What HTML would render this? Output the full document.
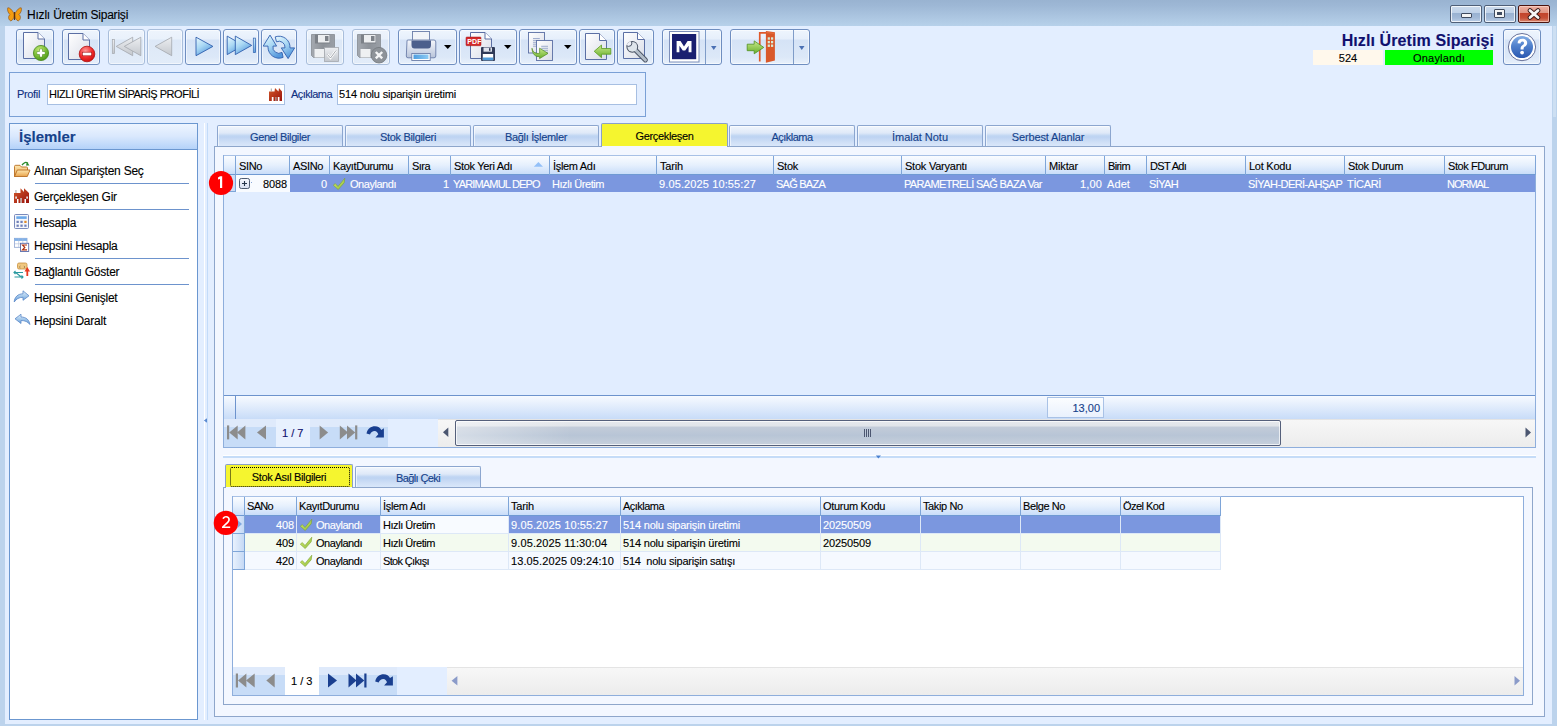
<!DOCTYPE html>
<html><head><meta charset="utf-8"><style>
*{box-sizing:border-box;margin:0;padding:0}
html,body{width:1557px;height:726px;overflow:hidden;background:#bcd3ec;font-family:"Liberation Sans",sans-serif;font-size:11px;color:#000}
body *{-webkit-text-stroke:0.12px currentColor}
.a{position:absolute}
.tb{position:absolute;top:29px;height:36px;border:1px solid #6f8ec0;border-radius:3px;background:linear-gradient(#eef5fd 0,#e6effb 27%,#d5e3f6 29%,#dce8f8 80%,#e8f0fb 100%);box-shadow:inset 0 0 0 1px rgba(255,255,255,.55)}
.tb.dis{border-color:#a9bedb;background:linear-gradient(#eef4fc 0,#e9f1fb 27%,#dde8f7 29%,#e2ecf9 100%)}
.tb .sp{position:absolute;top:0;bottom:0;border-left:1px solid #7f9cc8}
.lbl{color:#0f2f80;font-size:11px;white-space:nowrap}
.inp{position:absolute;background:#fff;border:1px solid #a7bfe2;height:21px}
.tab{position:absolute;top:125px;height:21px;width:126px;border:1px solid #8ca6cf;border-bottom:none;border-radius:2px 2px 0 0;background:linear-gradient(#f1f6fd 0,#dfe9f8 35%,#c2d7f3 48%,#bdd3f2 55%,#cfdff6 80%,#d9e7fa 100%);box-shadow:inset 1px 1px 0 rgba(255,255,255,.6);color:#15428b;text-align:center;line-height:22px;font-size:11px}
.tab.sel{background:linear-gradient(#f5f52f 0,#f5f52f calc(100% - 1px),#f3f7ff calc(100% - 1px));color:#000;border-color:#8aa0c8;box-shadow:none}
.gh{position:absolute;height:20px;background:linear-gradient(#fafcff 0,#e6f0fd 50%,#c9ddf9 100%);border-top:1px solid #a8c1e6;border-bottom:1px solid #6f9ad3}
.hc{position:absolute;top:0;height:19px;border-right:1px solid #7ea5d8;line-height:18px;padding-left:3px;white-space:nowrap;overflow:hidden;font-size:11px}
.hs{position:relative;top:1px}
.rc{position:absolute;height:18px;line-height:17px;white-space:pre;overflow:hidden;font-size:11px;padding:0 2px 0 3px}
.badge{position:absolute;width:24px;height:24px;border-radius:50%;background:#f00;color:#fff;font-size:17px;line-height:24px;text-align:center}
.item{position:absolute;left:34px;font-size:12px;white-space:nowrap}
.sep{position:absolute;left:35px;width:154px;height:1px;background:#6d93cd}
</style></head><body>
<div class="a" style="left:0;top:0;width:1557px;height:26px;background:linear-gradient(#99b3d1 0,#9db7d5 20%,#b7d1ea 100%)"></div>
<div class="a" style="left:27px;top:8px;font-size:12px;color:#000;letter-spacing:-0.201px;">Hızlı Üretim Siparişi</div>
<div class="a" style="left:5px;top:26px;width:1547px;height:698px;background:#e3eeff"></div>
<div class="a" style="left:1553px;top:26px;width:3px;height:91px;background:#cddff2"></div>
<div class="a" style="left:1450px;top:5px;width:32px;height:18px;border:1px solid #4f5f78;border-radius:2px;box-shadow:inset 0 0 0 1px rgba(255,255,255,.75);background:linear-gradient(#cddbed 0,#bfd1e8 42%,#98b1d1 44%,#a3bad8 75%,#bccfe7 100%)"><div class="a" style="left:10px;top:7px;width:11px;height:5px;background:#f4f4f4;border:1px solid #3f4a5e;border-radius:1px"></div></div>
<div class="a" style="left:1484px;top:5px;width:32px;height:18px;border:1px solid #4f5f78;border-radius:2px;box-shadow:inset 0 0 0 1px rgba(255,255,255,.75);background:linear-gradient(#cddbed 0,#bfd1e8 42%,#98b1d1 44%,#a3bad8 75%,#bccfe7 100%)"><div class="a" style="left:9px;top:3px;width:11px;height:9px;background:#f4f4f4;border:1px solid #3f4a5e;border-radius:1px"><div class="a" style="left:2px;top:2px;width:5px;height:3px;background:#3f4a5e;border:1px solid #3f4a5e"></div></div></div>
<div class="a" style="left:1518px;top:5px;width:32px;height:18px;border:1px solid #4a1410;border-radius:2px;box-shadow:inset 0 0 0 1px rgba(255,220,210,.6);background:linear-gradient(#eeb0a2 0,#df9482 42%,#c2432a 44%,#c64f36 75%,#d98a72 100%)"><svg class="a" style="left:8px;top:2px" width="14" height="12" viewBox="0 0 14 12"><path d="M3 2.5L11 9.5M11 2.5L3 9.5" stroke="#3a1a18" stroke-width="4.6" stroke-linecap="round"/><path d="M3 2.5L11 9.5M11 2.5L3 9.5" stroke="#f6f6f6" stroke-width="2.8" stroke-linecap="round"/></svg></div>
<div class="tb " style="left:16px;width:38px"></div>
<div class="tb " style="left:62px;width:38px"></div>
<div class="tb dis" style="left:108px;width:37px"></div>
<div class="tb dis" style="left:147px;width:36px"></div>
<div class="tb " style="left:185px;width:36px"></div>
<div class="tb " style="left:223px;width:36px"></div>
<div class="tb " style="left:261px;width:36px"></div>
<div class="tb dis" style="left:306px;width:38px"></div>
<div class="tb dis" style="left:352px;width:38px"></div>
<div class="tb " style="left:398px;width:59px"></div>
<div class="tb " style="left:459px;width:58px"></div>
<div class="tb " style="left:519px;width:58px"></div>
<div class="tb " style="left:579px;width:36px"></div>
<div class="tb " style="left:617px;width:37px"></div>
<div class="tb " style="left:662px;width:60px"><div class="sp" style="left:42px"></div></div>
<div class="tb " style="left:730px;width:80px"><div class="sp" style="left:62px"></div></div>
<div class="a" style="left:1293px;top:32px;width:201px;text-align:right;font-size:16px;font-weight:bold;color:#10106e;white-space:nowrap;letter-spacing:0.1px">Hızlı Üretim Siparişi</div>
<div class="a" style="left:1313px;top:50px;width:70px;height:15px;background:#fff8ec;text-align:center;font-size:11px;line-height:17px">524</div>
<div class="a" style="left:1385px;top:50px;width:108px;height:15px;background:#00ff00;text-align:center;font-size:11px;line-height:17px;letter-spacing:0.2px">Onaylandı</div>
<div class="tb" style="left:1503px;width:38px"></div>
<div class="a" style="left:9px;top:72px;width:637px;height:45px;border:1px solid #7aa0d6"></div>
<div class="a lbl" style="left:17px;top:88px;letter-spacing:-0.344px;">Profil</div>
<div class="inp" style="left:47px;top:84px;width:238px"><span class="a" style="left:1px;top:3px;white-space:nowrap;letter-spacing:-0.479px;">HIZLI ÜRETİM SİPARİŞ PROFİLİ</span></div>
<div class="a lbl" style="left:291px;top:88px;letter-spacing:-0.529px;">Açıklama</div>
<div class="inp" style="left:337px;top:84px;width:300px"><span class="a" style="left:1px;top:3px;white-space:nowrap;letter-spacing:-0.18px;">514 nolu siparişin üretimi</span></div>
<div class="a" style="left:9px;top:123px;width:189px;height:597px;background:#fff;border:1px solid #6b97d0"></div>
<div class="a" style="left:10px;top:124px;width:187px;height:26px;background:linear-gradient(#eef5ff 0,#d9e8fd 50%,#b4d2f9 100%);border-bottom:1px solid #6b97d0"></div>
<div class="a" style="left:19px;top:128px;font-size:15px;font-weight:bold;color:#15428b">İşlemler</div>
<div class="item" style="top:164px;letter-spacing:-0.246px;">Alınan Siparişten Seç</div>
<div class="item" style="top:190px;letter-spacing:-0.26px;">Gerçekleşen Gir</div>
<div class="item" style="top:216px;letter-spacing:-0.283px;">Hesapla</div>
<div class="item" style="top:239px;letter-spacing:-0.262px;">Hepsini Hesapla</div>
<div class="item" style="top:265px;letter-spacing:-0.237px;">Bağlantılı Göster</div>
<div class="item" style="top:291px;letter-spacing:-0.246px;">Hepsini Genişlet</div>
<div class="item" style="top:314px;letter-spacing:-0.242px;">Hepsini Daralt</div>
<div class="sep" style="top:183px"></div>
<div class="sep" style="top:209px"></div>
<div class="sep" style="top:258px"></div>
<div class="sep" style="top:284px"></div>
<div class="a" style="left:204px;top:123px;width:1px;height:597px;background:#ffffff"></div>
<div class="a" style="left:207px;top:123px;width:1px;height:597px;background:#c3dbf9"></div>
<div class="a" style="left:214px;top:146px;width:1331px;height:571px;background:#f3f7ff;border:1px solid #8ea6cb"></div>
<div class="tab" style="left:217px;letter-spacing:-0.387px;">Genel Bilgiler</div>
<div class="tab" style="left:345px;letter-spacing:-0.323px;">Stok Bilgileri</div>
<div class="tab" style="left:473px;letter-spacing:-0.331px;">Bağlı İşlemler</div>
<div class="tab sel" style="left:601px;top:123px;height:24px;line-height:25px;width:127px;letter-spacing:-0.341px;">Gerçekleşen</div>
<div class="tab" style="left:729px;letter-spacing:-0.529px;">Açıklama</div>
<div class="tab" style="left:857px;letter-spacing:-0.022px;">İmalat Notu</div>
<div class="tab" style="left:985px;letter-spacing:-0.147px;">Serbest Alanlar</div>
<div class="a" style="left:223px;top:155px;width:1313px;height:293px;border:1px solid #8eaedc;background:#e1edff"></div>
<div class="gh" style="left:224px;top:155px;width:1311px"></div>
<div class="hc" style="left:224px;top:156px;width:12px;letter-spacing:0px;"><span class="hs"></span></div>
<div class="hc" style="left:236px;top:156px;width:54px;letter-spacing:-0.364px;"><span class="hs">SINo</span></div>
<div class="hc" style="left:290px;top:156px;width:40px;letter-spacing:-0.358px;"><span class="hs">ASINo</span></div>
<div class="hc" style="left:330px;top:156px;width:79px;letter-spacing:-0.381px;"><span class="hs">KayıtDurumu</span></div>
<div class="hc" style="left:409px;top:156px;width:42px;letter-spacing:-0.543px;"><span class="hs">Sıra</span></div>
<div class="hc" style="left:451px;top:156px;width:99px;letter-spacing:-0.323px;"><span class="hs">Stok Yeri Adı</span></div>
<div class="hc" style="left:550px;top:156px;width:107px;letter-spacing:-0.316px;"><span class="hs">İşlem Adı</span></div>
<div class="hc" style="left:657px;top:156px;width:117px;letter-spacing:-0.212px;"><span class="hs">Tarih</span></div>
<div class="hc" style="left:774px;top:156px;width:128px;letter-spacing:-0.253px;"><span class="hs">Stok</span></div>
<div class="hc" style="left:902px;top:156px;width:144px;letter-spacing:-0.233px;"><span class="hs">Stok Varyantı</span></div>
<div class="hc" style="left:1046px;top:156px;width:59px;letter-spacing:-0.157px;"><span class="hs">Miktar</span></div>
<div class="hc" style="left:1105px;top:156px;width:42px;letter-spacing:-0.61px;"><span class="hs">Birim</span></div>
<div class="hc" style="left:1147px;top:156px;width:99px;letter-spacing:-0.652px;"><span class="hs">DST Adı</span></div>
<div class="hc" style="left:1246px;top:156px;width:99px;letter-spacing:-0.255px;"><span class="hs">Lot Kodu</span></div>
<div class="hc" style="left:1345px;top:156px;width:100px;letter-spacing:-0.307px;"><span class="hs">Stok Durum</span></div>
<div class="hc" style="left:1445px;top:156px;width:91px;letter-spacing:-0.436px;"><span class="hs">Stok FDurum</span></div>
<div class="a" style="left:290px;top:175px;width:1245px;height:17px;background:#7b97df"></div>
<div class="a" style="left:236px;top:175px;width:54px;height:17px;background:#f8fbff"></div>
<div class="a" style="left:224px;top:175px;width:12px;height:17px;background:linear-gradient(90deg,#e8f1fd,#c5d9f5);border-right:1px solid #7ea5d8;border-bottom:1px solid #7ea5d8"></div>
<div class="rc" style="left:235px;top:176px;width:54px;text-align:right;color:#000;letter-spacing:-0.118px;">8088</div>
<div class="rc" style="left:289px;top:176px;width:40px;text-align:right;color:#fff;letter-spacing:-0.118px;">0</div>
<div class="rc" style="left:347px;top:176px;width:61px;text-align:left;color:#fff;letter-spacing:-0.461px;">Onaylandı</div>
<div class="rc" style="left:408px;top:176px;width:43px;text-align:right;color:#fff;letter-spacing:-0.118px;">1</div>
<div class="rc" style="left:450px;top:176px;width:99px;text-align:left;color:#fff;letter-spacing:-0.831px;">YARIMAMUL DEPO</div>
<div class="rc" style="left:549px;top:176px;width:107px;text-align:left;color:#fff;letter-spacing:-0.454px;">Hızlı Üretim</div>
<div class="rc" style="left:656px;top:176px;width:117px;text-align:left;color:#fff;letter-spacing:0.122px;">9.05.2025 10:55:27</div>
<div class="rc" style="left:773px;top:176px;width:128px;text-align:left;color:#fff;letter-spacing:-0.752px;">SAĞ BAZA</div>
<div class="rc" style="left:901px;top:176px;width:144px;text-align:left;color:#fff;letter-spacing:-0.661px;">PARAMETRELİ SAĞ BAZA Var</div>
<div class="rc" style="left:1045px;top:176px;width:59px;text-align:right;color:#fff;letter-spacing:0.148px;">1,00</div>
<div class="rc" style="left:1104px;top:176px;width:42px;text-align:left;color:#fff;letter-spacing:0.093px;">Adet</div>
<div class="rc" style="left:1146px;top:176px;width:99px;text-align:left;color:#fff;letter-spacing:-0.602px;">SİYAH</div>
<div class="rc" style="left:1245px;top:176px;width:99px;text-align:left;color:#fff;letter-spacing:-0.557px;">SİYAH-DERİ-AHŞAP</div>
<div class="rc" style="left:1344px;top:176px;width:100px;text-align:left;color:#fff;letter-spacing:-0.343px;">TİCARİ</div>
<div class="rc" style="left:1444px;top:176px;width:91px;text-align:left;color:#fff;letter-spacing:-1.01px;">NORMAL</div>
<div class="a" style="left:224px;top:395px;width:1311px;height:24px;background:linear-gradient(#f7faff,#c8dcf8);border-top:1px solid #6d93cd"></div>
<div class="a" style="left:235px;top:396px;width:1px;height:23px;background:#6d93cd"></div>
<div class="a" style="left:1047px;top:397px;width:57px;height:21px;border:1px solid #a9c2e6;background:linear-gradient(#fbfdff,#e9f1fd);text-align:right;padding-right:3px;line-height:20px;color:#15428b">13,00</div>
<div class="a" style="left:224px;top:419px;width:214px;height:28px;background:#e3eeff"></div>
<div class="a" style="left:224px;top:419px;width:52px;height:28px;background:linear-gradient(#dfeafb 0,#dfeafb 30%,#c7dcf7 30%,#c7dcf7 100%)"></div>
<div class="a" style="left:276px;top:419px;width:34px;height:28px;background:#e8f1fe"></div>
<div class="a" style="left:310px;top:419px;width:78px;height:28px;background:linear-gradient(#dfeafb 0,#dfeafb 30%,#c7dcf7 30%,#c7dcf7 100%)"></div>
<div class="a" style="left:438px;top:419px;width:1097px;height:28px;background:linear-gradient(#f7f7f7,#ececec);border-top:1px solid #e4e4e4"></div>
<div class="a" style="left:282px;top:427px;color:#10106e">1 / 7</div>
<div class="a" style="left:455px;top:420px;width:826px;height:26px;border:1px solid #55607b;border-radius:2px;box-shadow:inset 0 0 0 1px rgba(255,255,255,.7);background:linear-gradient(90deg,rgba(255,255,255,.4) 0,rgba(255,255,255,0) 14%),linear-gradient(#e6e9ed 0,#e0e4e9 22%,#c3ccd9 24%,#b8c5d6 60%,#c7d0dc 100%)"></div>
<div class="a" style="left:864px;top:429px;width:1px;height:8px;background:#4b5670"></div><div class="a" style="left:866px;top:429px;width:1px;height:8px;background:#4b5670"></div><div class="a" style="left:868px;top:429px;width:1px;height:8px;background:#4b5670"></div><div class="a" style="left:870px;top:429px;width:1px;height:8px;background:#4b5670"></div>
<div class="a" style="left:223px;top:455px;width:1313px;height:1px;background:#fff"></div><div class="a" style="left:223px;top:456px;width:1313px;height:2px;background:#c5dcf8"></div>
<div class="a" style="left:223px;top:487px;width:1310px;height:218px;background:#f3f7ff;border:1px solid #8ea6cb"></div>
<div class="tab sel" style="left:225px;top:464px;height:24px;width:128px;line-height:24px"><div class="a" style="left:4px;top:2px;right:2px;bottom:1px;border:1px dotted #000;border-radius:2px"></div><span style="letter-spacing:-0.364px;">Stok Asıl Bilgileri</span></div>
<div class="tab" style="left:355px;top:466px;height:21px;width:126px;line-height:22px;letter-spacing:-0.613px;">Bağlı Çeki</div>
<div class="a" style="left:232px;top:496px;width:1292px;height:200px;border:1px solid #8eaedc;background:#fff"></div>
<div class="gh" style="left:233px;top:496px;width:988px"></div>
<div class="hc" style="left:232px;top:497px;width:13px;letter-spacing:0px;"></div>
<div class="hc" style="left:244px;top:497px;width:53px;letter-spacing:-0.684px;">SANo</div>
<div class="hc" style="left:296px;top:497px;width:85px;letter-spacing:-0.381px;">KayıtDurumu</div>
<div class="hc" style="left:380px;top:497px;width:129px;letter-spacing:-0.316px;">İşlem Adı</div>
<div class="hc" style="left:508px;top:497px;width:113px;letter-spacing:-0.212px;">Tarih</div>
<div class="hc" style="left:620px;top:497px;width:201px;letter-spacing:-0.529px;">Açıklama</div>
<div class="hc" style="left:820px;top:497px;width:101px;letter-spacing:-0.311px;">Oturum Kodu</div>
<div class="hc" style="left:920px;top:497px;width:101px;letter-spacing:-0.377px;">Takip No</div>
<div class="hc" style="left:1020px;top:497px;width:101px;letter-spacing:-0.406px;">Belge No</div>
<div class="hc" style="left:1120px;top:497px;width:101px;letter-spacing:-0.531px;">Özel Kod</div>
<div class="a" style="left:233px;top:516px;width:12px;height:18px;background:linear-gradient(90deg,#e8f1fd,#c5d9f5);border-right:1px solid #7ea5d8;border-bottom:1px solid #7ea5d8"></div>
<div class="a" style="left:245px;top:516px;width:52px;height:18px;background:#7b97df;border-right:1px solid #dde8f7;border-bottom:1px solid #dde8f7"></div>
<div class="rc" style="left:244px;top:517px;width:52px;text-align:right;color:#fff;letter-spacing:-0.118px;">408</div>
<div class="a" style="left:297px;top:516px;width:84px;height:18px;background:#7b97df;border-right:1px solid #dde8f7;border-bottom:1px solid #dde8f7"></div>
<div class="rc" style="left:313px;top:517px;width:67px;text-align:left;color:#fff;letter-spacing:-0.461px;">Onaylandı</div>
<div class="a" style="left:381px;top:516px;width:128px;height:18px;background:#f8fbff;border-right:1px solid #dde8f7;border-bottom:1px solid #dde8f7"></div>
<div class="rc" style="left:380px;top:517px;width:128px;text-align:left;color:#000;letter-spacing:-0.454px;">Hızlı Üretim</div>
<div class="a" style="left:509px;top:516px;width:112px;height:18px;background:#7b97df;border-right:1px solid #dde8f7;border-bottom:1px solid #dde8f7"></div>
<div class="rc" style="left:508px;top:517px;width:112px;text-align:left;color:#fff;letter-spacing:0.122px;">9.05.2025 10:55:27</div>
<div class="a" style="left:621px;top:516px;width:200px;height:18px;background:#7b97df;border-right:1px solid #dde8f7;border-bottom:1px solid #dde8f7"></div>
<div class="rc" style="left:620px;top:517px;width:200px;text-align:left;color:#fff;letter-spacing:-0.18px;">514 nolu siparişin üretimi</div>
<div class="a" style="left:821px;top:516px;width:100px;height:18px;background:#7b97df;border-right:1px solid #dde8f7;border-bottom:1px solid #dde8f7"></div>
<div class="rc" style="left:820px;top:517px;width:100px;text-align:left;color:#fff;letter-spacing:-0.118px;">20250509</div>
<div class="a" style="left:921px;top:516px;width:100px;height:18px;background:#7b97df;border-right:1px solid #dde8f7;border-bottom:1px solid #dde8f7"></div>
<div class="a" style="left:1021px;top:516px;width:100px;height:18px;background:#7b97df;border-right:1px solid #dde8f7;border-bottom:1px solid #dde8f7"></div>
<div class="a" style="left:1121px;top:516px;width:100px;height:18px;background:#7b97df;border-right:1px solid #dde8f7;border-bottom:1px solid #dde8f7"></div>
<div class="a" style="left:233px;top:534px;width:12px;height:18px;background:linear-gradient(90deg,#e8f1fd,#c5d9f5);border-right:1px solid #7ea5d8;border-bottom:1px solid #7ea5d8"></div>
<div class="a" style="left:245px;top:534px;width:52px;height:18px;background:#f3faef;border-right:1px solid #dde8f7;border-bottom:1px solid #dde8f7"></div>
<div class="rc" style="left:244px;top:535px;width:52px;text-align:right;color:#000;letter-spacing:-0.118px;">409</div>
<div class="a" style="left:297px;top:534px;width:84px;height:18px;background:#f3faef;border-right:1px solid #dde8f7;border-bottom:1px solid #dde8f7"></div>
<div class="rc" style="left:313px;top:535px;width:67px;text-align:left;color:#000;letter-spacing:-0.461px;">Onaylandı</div>
<div class="a" style="left:381px;top:534px;width:128px;height:18px;background:#f3faef;border-right:1px solid #dde8f7;border-bottom:1px solid #dde8f7"></div>
<div class="rc" style="left:380px;top:535px;width:128px;text-align:left;color:#000;letter-spacing:-0.454px;">Hızlı Üretim</div>
<div class="a" style="left:509px;top:534px;width:112px;height:18px;background:#f3faef;border-right:1px solid #dde8f7;border-bottom:1px solid #dde8f7"></div>
<div class="rc" style="left:508px;top:535px;width:112px;text-align:left;color:#000;letter-spacing:0.122px;">9.05.2025 11:30:04</div>
<div class="a" style="left:621px;top:534px;width:200px;height:18px;background:#f3faef;border-right:1px solid #dde8f7;border-bottom:1px solid #dde8f7"></div>
<div class="rc" style="left:620px;top:535px;width:200px;text-align:left;color:#000;letter-spacing:-0.18px;">514 nolu siparişin üretimi</div>
<div class="a" style="left:821px;top:534px;width:100px;height:18px;background:#f3faef;border-right:1px solid #dde8f7;border-bottom:1px solid #dde8f7"></div>
<div class="rc" style="left:820px;top:535px;width:100px;text-align:left;color:#000;letter-spacing:-0.118px;">20250509</div>
<div class="a" style="left:921px;top:534px;width:100px;height:18px;background:#f3faef;border-right:1px solid #dde8f7;border-bottom:1px solid #dde8f7"></div>
<div class="a" style="left:1021px;top:534px;width:100px;height:18px;background:#f3faef;border-right:1px solid #dde8f7;border-bottom:1px solid #dde8f7"></div>
<div class="a" style="left:1121px;top:534px;width:100px;height:18px;background:#f3faef;border-right:1px solid #dde8f7;border-bottom:1px solid #dde8f7"></div>
<div class="a" style="left:233px;top:552px;width:12px;height:18px;background:linear-gradient(90deg,#e8f1fd,#c5d9f5);border-right:1px solid #7ea5d8;border-bottom:1px solid #7ea5d8"></div>
<div class="a" style="left:245px;top:552px;width:52px;height:18px;background:#f5f9ff;border-right:1px solid #dde8f7;border-bottom:1px solid #dde8f7"></div>
<div class="rc" style="left:244px;top:553px;width:52px;text-align:right;color:#000;letter-spacing:-0.118px;">420</div>
<div class="a" style="left:297px;top:552px;width:84px;height:18px;background:#f5f9ff;border-right:1px solid #dde8f7;border-bottom:1px solid #dde8f7"></div>
<div class="rc" style="left:313px;top:553px;width:67px;text-align:left;color:#000;letter-spacing:-0.461px;">Onaylandı</div>
<div class="a" style="left:381px;top:552px;width:128px;height:18px;background:#f5f9ff;border-right:1px solid #dde8f7;border-bottom:1px solid #dde8f7"></div>
<div class="rc" style="left:380px;top:553px;width:128px;text-align:left;color:#000;letter-spacing:-0.653px;">Stok Çıkışı</div>
<div class="a" style="left:509px;top:552px;width:112px;height:18px;background:#f5f9ff;border-right:1px solid #dde8f7;border-bottom:1px solid #dde8f7"></div>
<div class="rc" style="left:508px;top:553px;width:112px;text-align:left;color:#000;letter-spacing:0.109px;">13.05.2025 09:24:10</div>
<div class="a" style="left:621px;top:552px;width:200px;height:18px;background:#f5f9ff;border-right:1px solid #dde8f7;border-bottom:1px solid #dde8f7"></div>
<div class="rc" style="left:620px;top:553px;width:200px;text-align:left;color:#000;letter-spacing:-0.231px;">514  nolu siparişin satışı</div>
<div class="a" style="left:821px;top:552px;width:100px;height:18px;background:#f5f9ff;border-right:1px solid #dde8f7;border-bottom:1px solid #dde8f7"></div>
<div class="a" style="left:921px;top:552px;width:100px;height:18px;background:#f5f9ff;border-right:1px solid #dde8f7;border-bottom:1px solid #dde8f7"></div>
<div class="a" style="left:1021px;top:552px;width:100px;height:18px;background:#f5f9ff;border-right:1px solid #dde8f7;border-bottom:1px solid #dde8f7"></div>
<div class="a" style="left:1121px;top:552px;width:100px;height:18px;background:#f5f9ff;border-right:1px solid #dde8f7;border-bottom:1px solid #dde8f7"></div>
<div class="a" style="left:233px;top:667px;width:214px;height:28px;background:#e3eeff"></div>
<div class="a" style="left:233px;top:667px;width:52px;height:28px;background:linear-gradient(#dfeafb 0,#dfeafb 30%,#c7dcf7 30%,#c7dcf7 100%)"></div>
<div class="a" style="left:285px;top:667px;width:34px;height:28px;background:#fff"></div>
<div class="a" style="left:319px;top:667px;width:78px;height:28px;background:linear-gradient(#dfeafb 0,#dfeafb 30%,#c7dcf7 30%,#c7dcf7 100%)"></div>
<div class="a" style="left:447px;top:667px;width:1076px;height:28px;background:linear-gradient(#f7f7f7,#ececec);border-top:1px solid #e4e4e4"></div>
<div class="a" style="left:291px;top:675px;color:#000">1 / 3</div>
<svg class="a" style="left:0;top:0;z-index:7" width="1557" height="726" viewBox="0 0 1557 726"><circle cx="221" cy="183" r="12.1" fill="#ff0000"/><path d="M220 176.2 H222.2 V188 H220 V179 L218 179.6 V177.6 Z" fill="#fff"/><circle cx="225.9" cy="522.9" r="12.2" fill="#ff0000"/><path d="M222.4 518.6 C222.8 516.8 224.3 515.9 226.1 515.9 C228.3 515.9 229.9 517.3 229.9 519.4 C229.9 521.2 228.8 522.4 227.2 523.9 L224.4 526.6 H230.2 V528 H222 V526.7 L226 522.8 C227.5 521.3 228.2 520.5 228.2 519.4 C228.2 518.1 227.3 517.4 226.1 517.4 C224.9 517.4 224.2 518 223.9 519.1 Z" fill="#fff"/></svg>
<svg class="a" style="left:0;top:0;z-index:5;pointer-events:none" width="1557" height="726" viewBox="0 0 1557 726">
<defs>
<linearGradient id="gDoc" x1="0" y1="0" x2="1" y2="1"><stop offset="0" stop-color="#ffffff"/><stop offset="1" stop-color="#d9dde8"/></linearGradient>
<radialGradient id="gGreen" cx="0.4" cy="0.3" r="0.8"><stop offset="0" stop-color="#c8ec7a"/><stop offset="0.6" stop-color="#6fb52c"/><stop offset="1" stop-color="#3f8a17"/></radialGradient>
<radialGradient id="gRed" cx="0.4" cy="0.3" r="0.8"><stop offset="0" stop-color="#ff9a9a"/><stop offset="0.55" stop-color="#f02a2a"/><stop offset="1" stop-color="#c40a0a"/></radialGradient>
<linearGradient id="gGray" x1="0" y1="0" x2="0" y2="1"><stop offset="0" stop-color="#eceef1"/><stop offset="1" stop-color="#c3c7cd"/></linearGradient>
<linearGradient id="gBlue" x1="0" y1="0" x2="0.6" y2="1"><stop offset="0" stop-color="#eaf9fe"/><stop offset="0.5" stop-color="#a9d8f4"/><stop offset="1" stop-color="#5598dc"/></linearGradient>
<linearGradient id="gFlop" x1="0" y1="0" x2="1" y2="0"><stop offset="0" stop-color="#a4a9b0"/><stop offset="0.5" stop-color="#8d9299"/><stop offset="1" stop-color="#9a9fa6"/></linearGradient>
<linearGradient id="gArrowG" x1="0" y1="0" x2="0" y2="1"><stop offset="0" stop-color="#c9ec8a"/><stop offset="1" stop-color="#6fb530"/></linearGradient>
<linearGradient id="gHelp" x1="0" y1="0" x2="0" y2="1"><stop offset="0" stop-color="#7aa6e0"/><stop offset="0.5" stop-color="#4b7cc8"/><stop offset="1" stop-color="#2d5db3"/></linearGradient>
<linearGradient id="gDoor" x1="0" y1="0" x2="1" y2="0"><stop offset="0" stop-color="#d0451c"/><stop offset="1" stop-color="#e8673a"/></linearGradient>
<linearGradient id="gFact" x1="0" y1="0" x2="1" y2="1"><stop offset="0" stop-color="#d05a28"/><stop offset="1" stop-color="#9a120c"/></linearGradient>
</defs>
<!-- butterfly -->
<g transform="translate(7,7)">
<path d="M7.2 7 C5 2.5 2.5 0.5 0.8 0.8 C0 2.5 1 6 3 7.5 C1 9 1.2 12.5 3.5 13.8 C5.5 14 6.8 11 7.2 9 Z" fill="#f39c12" stroke="#8a4a0a" stroke-width="0.6"/>
<path d="M7.8 7 C10 2.5 12.5 0.5 14.2 0.8 C15 2.5 14 6 12 7.5 C14 9 13.8 12.5 11.5 13.8 C9.5 14 8.2 11 7.8 9 Z" fill="#f39c12" stroke="#8a4a0a" stroke-width="0.6"/>
<rect x="6.9" y="5" width="1.2" height="8" fill="#5a3010"/>
</g>
<!-- 1 new -->
<path d="M23.5 32.5 H38 L44.5 39 V58.5 H23.5 Z" fill="url(#gDoc)" stroke="#5b6fa4"/>
<path d="M38 32.5 V39 H44.5" fill="#fff" stroke="#5b6fa4"/>
<circle cx="41" cy="53" r="7.6" fill="url(#gGreen)" stroke="#4a8a1e" stroke-width="0.8"/>
<path d="M41 48.8 V57.2 M36.8 53 H45.2" stroke="#2f6a12" stroke-width="3.8" opacity="0.55"/><path d="M41 49.2 V56.8 M37.2 53 H44.8" stroke="#fff" stroke-width="2.4"/>
<!-- 2 delete -->
<path d="M68.5 33.5 H83 L89.5 40 V59.5 H68.5 Z" fill="url(#gDoc)" stroke="#5b6fa4"/>
<path d="M83 33.5 V40 H89.5" fill="#fff" stroke="#5b6fa4"/>
<circle cx="87" cy="54" r="7.8" fill="url(#gRed)" stroke="#b01010" stroke-width="0.8"/>
<rect x="82.3" y="52.2" width="9.4" height="3.6" fill="#fff" stroke="#a01010" stroke-width="0.6"/>
<!-- 3 first (disabled) -->
<rect x="112.3" y="39.5" width="2.3" height="14" fill="url(#gGray)" stroke="#a3a7ad" stroke-width="0.7"/>
<path d="M116.2 46.4 L132.7 37.2 V55.7 Z" fill="url(#gGray)" stroke="#a3a7ad" stroke-width="0.8"/>
<path d="M124.3 46.4 L140.8 37.2 V55.7 Z" fill="url(#gGray)" stroke="#a3a7ad" stroke-width="0.8"/>
<!-- 4 prev -->
<path d="M155.1 46.4 L171.7 37.2 V55.7 Z" fill="url(#gGray)" stroke="#a3a7ad" stroke-width="0.8"/>
<!-- 5 next -->
<path d="M196 37.2 L212.9 46.4 L196 55.7 Z" fill="url(#gBlue)" stroke="#2f5fae" stroke-width="0.9"/>
<!-- 6 last -->
<path d="M227.2 36.1 L243.4 45.4 L227.2 54.6 Z" fill="url(#gBlue)" stroke="#2f5fae" stroke-width="0.9"/>
<path d="M235.3 36.1 L251.7 45.4 L235.3 54.6 Z" fill="url(#gBlue)" stroke="#2f5fae" stroke-width="0.9"/>
<rect x="253.3" y="38.1" width="2.3" height="14.5" fill="url(#gBlue)" stroke="#2f5fae" stroke-width="0.7"/>
<!-- 7 refresh -->
<path d="M270 35.1 L276.6 46.1 H273 A6 6 0 0 0 282 52.4 L283.1 57.4 A11 11 0 0 1 268 47.2 V46.1 H263.2 Z" fill="url(#gBlue)" stroke="#2f5fae" stroke-width="0.9" stroke-linejoin="round"/>
<path d="M275.2 36.9 A11 11 0 0 1 290 47.9 H294.6 L288.1 58.6 L281.3 47.9 H285 A6 6 0 0 0 276.5 41.8 Z" fill="url(#gBlue)" stroke="#2f5fae" stroke-width="0.9" stroke-linejoin="round"/>
<!-- 8 save disabled -->
<path d="M311.5 34.5 H334.5 V57.5 H313.5 L311.5 55.5 Z" fill="url(#gFlop)" stroke="#868b92" stroke-width="0.8"/>
<rect x="315" y="34.5" width="15" height="9" fill="#7c8188"/>
<rect x="318" y="35" width="11.5" height="7.5" fill="#eceef0"/>
<rect x="325" y="36" width="3.5" height="5" fill="#7c8188"/>
<rect x="314.5" y="49" width="10" height="8.5" fill="#eef0f2"/>
<rect x="324.5" y="47.5" width="14" height="14" fill="url(#gGray)" stroke="#a5a9ae" stroke-width="0.8"/>
<path d="M327.5 54.5 L330.5 58 L336 50.5" stroke="#fff" stroke-width="2.2" fill="none"/>
<path d="M327.5 54.5 L330.5 58 L336 50.5" stroke="#8e939a" stroke-width="0.8" fill="none"/>
<!-- 9 cancel disabled -->
<path d="M357.5 34.5 H380.5 V57.5 H359.5 L357.5 55.5 Z" fill="url(#gFlop)" stroke="#868b92" stroke-width="0.8"/>
<rect x="361" y="34.5" width="15" height="9" fill="#7c8188"/>
<rect x="364" y="35" width="11.5" height="7.5" fill="#eceef0"/>
<rect x="371" y="36" width="3.5" height="5" fill="#7c8188"/>
<rect x="360.5" y="49" width="10" height="8.5" fill="#eef0f2"/>
<circle cx="379" cy="55.2" r="7.8" fill="#8e9399" stroke="#74787e" stroke-width="0.8"/>
<path d="M375.8 52 L382.2 58.4 M382.2 52 L375.8 58.4" stroke="#f4f5f6" stroke-width="2.4"/>
</svg>

<svg class="a" style="left:0;top:0;z-index:5;pointer-events:none" width="1557" height="726" viewBox="0 0 1557 726">
<defs>
<linearGradient id="hDoc" x1="0" y1="0" x2="1" y2="1"><stop offset="0" stop-color="#ffffff"/><stop offset="1" stop-color="#d9dde8"/></linearGradient>
<linearGradient id="hPr" x1="0" y1="0" x2="0" y2="1"><stop offset="0" stop-color="#f6f8fc"/><stop offset="1" stop-color="#b7c3da"/></linearGradient>
<linearGradient id="hTray" x1="0" y1="0" x2="1" y2="0"><stop offset="0" stop-color="#4e9ee0"/><stop offset="1" stop-color="#8ccaf3"/></linearGradient>
<linearGradient id="hArrow" x1="0" y1="0" x2="0" y2="1"><stop offset="0" stop-color="#c8ea8c"/><stop offset="1" stop-color="#68ae2a"/></linearGradient>
<linearGradient id="hWr" x1="0" y1="0" x2="1" y2="1"><stop offset="0" stop-color="#e5e8ec"/><stop offset="1" stop-color="#8a949e"/></linearGradient>
<linearGradient id="hHelp" x1="0" y1="0" x2="0" y2="1"><stop offset="0" stop-color="#82ace4"/><stop offset="0.45" stop-color="#4f80cc"/><stop offset="1" stop-color="#2b58b0"/></linearGradient>
<linearGradient id="hFact" x1="0" y1="0" x2="1" y2="1"><stop offset="0" stop-color="#d2592a"/><stop offset="1" stop-color="#9a120c"/></linearGradient>
</defs>
<!-- 10 print -->
<rect x="412.5" y="31.5" width="17" height="12" fill="#f2f4f8" stroke="#6a7da8" stroke-width="0.9"/>
<path d="M407 41 Q406.5 40 408.5 40 H434 Q435.8 40 435.8 42 V56 Q435.8 57.8 434 57.8 H408 Q406.3 57.8 406.3 56 Z" fill="url(#hPr)" stroke="#6a7da8" stroke-width="0.9"/>
<path d="M411.5 40.5 H431 V45 Q431 48.5 428 48.5 H414.5 Q411.5 48.5 411.5 45 Z" fill="#4c5f8c"/>
<rect x="411.8" y="53.5" width="18.4" height="7" fill="#fff" stroke="#6a7da8" stroke-width="0.9"/>
<rect x="413.5" y="54.5" width="15" height="4.5" fill="url(#hTray)"/>
<path d="M444 45 H451.5 L447.75 49 Z" fill="#000"/>
<!-- 11 pdf -->
<path d="M470.5 32.5 H485 L491.5 39 V58.5 H470.5 Z" fill="url(#hDoc)" stroke="#5b6fa4"/>
<path d="M485 32.5 V39 H491.5" fill="#fff" stroke="#5b6fa4"/>
<rect x="466" y="37" width="15" height="8.7" rx="0.8" fill="#d42a2a" stroke="#a01515" stroke-width="0.5"/>
<text x="467.2" y="44" font-family="Liberation Sans" font-weight="bold" font-size="7" fill="#fff" letter-spacing="0.2">PDF</text>
<rect x="481" y="47" width="14" height="14" rx="1" fill="#2f3a58"/>
<rect x="483.5" y="47.5" width="8.5" height="4.2" fill="#dfe4ee"/>
<rect x="489" y="48.2" width="1.5" height="2.6" fill="#2f3a58"/>
<rect x="482.8" y="54" width="10.4" height="6.2" fill="#fff"/>
<rect x="482.8" y="57.5" width="10.4" height="2.7" fill="#4f9ad8"/>
<path d="M504 45 H511.5 L507.75 49 Z" fill="#000"/>
<!-- 12 copy -->
<rect x="528.5" y="32.5" width="16" height="20.5" fill="url(#hDoc)" stroke="#5b6fa4" stroke-width="0.9"/>
<path d="M533 38.5 H539.8 M533 40.4 H539.8 M533 42.3 H539.8 M533 44.2 H539.8 M533 46.2 H539.8" stroke="#7d8fbb" stroke-width="0.7"/>
<rect x="536.5" y="40.5" width="16" height="20" fill="url(#hDoc)" stroke="#5b6fa4" stroke-width="0.9"/>
<path d="M541.2 46.3 H548 M541.2 48.3 H548 M541.2 50.3 H548 M541.2 52.3 H548" stroke="#7d8fbb" stroke-width="0.7"/>
<path d="M532 48.3 C532.8 52.3 535.5 53.8 539.6 53.4 V48.2 L548 53.4 L539.6 58.6 V56.6 C535.2 57 532.4 54.2 532 48.3 Z" fill="url(#hArrow)" stroke="#4f8a1e" stroke-width="0.7" stroke-linejoin="round"/>
<path d="M564 45 H571.5 L567.75 49 Z" fill="#000"/>
<!-- 13 doc arrow -->
<path d="M585.5 33.5 H599.5 L606.5 40.5 V59.5 H585.5 Z" fill="url(#hDoc)" stroke="#5b6fa4"/>
<path d="M599.5 33.5 V40.5 H606.5" fill="#fff" stroke="#5b6fa4"/>
<path d="M594.2 51.3 L601.5 45 V48.5 H610.8 V54.2 H601.5 V57.7 Z" fill="url(#hArrow)" stroke="#5a9a22" stroke-width="0.8"/>
<!-- 14 wrench -->
<path d="M623.5 32.5 H637.5 L644.5 39.5 V58.5 H623.5 Z" fill="url(#hDoc)" stroke="#5b6fa4"/>
<path d="M637.5 32.5 V39.5 H644.5" fill="#fff" stroke="#5b6fa4"/>
<clipPath id="wrClip"><circle cx="632.3" cy="46.8" r="5.9"/></clipPath>
<line x1="633" y1="47.5" x2="645.4" y2="60" stroke="#4a5364" stroke-width="4.9" stroke-linecap="round"/>
<circle cx="632.3" cy="46.8" r="5.9" fill="#4a5364"/>
<line x1="633" y1="47.5" x2="645.4" y2="60" stroke="#b3bdc9" stroke-width="3.1" stroke-linecap="round"/>
<circle cx="632.3" cy="46.8" r="4.9" fill="#dfe5eb"/>
<g clip-path="url(#wrClip)"><circle cx="628.6" cy="43.1" r="3.3" fill="#eef0f6" stroke="#4a5364" stroke-width="1"/></g>
<!-- 15 M -->
<rect x="669.5" y="31.5" width="29.5" height="30.5" fill="#fff" stroke="#7d8fba" stroke-width="1"/>
<rect x="672" y="34" width="24.2" height="25.2" fill="#1a1f70"/>
<path d="M676.6 52.2 V41 H680.5 L684 46.5 L687.6 41 H691.5 V52.2 H688.6 V45.8 L685.2 50.5 H682.8 L679.4 45.8 V52.2 Z" fill="#fff"/>
<path d="M711 46 H716.5 L713.75 50 Z" fill="#4a70b4"/>
<!-- 16 exit -->
<path d="M758.9 32 H766.3 V33.8 H760.6 V61.5 H758.9 Z" fill="#e0592a"/>
<path d="M765.9 31.1 L774.9 32.2 V60.5 L765.9 62.8 Z" fill="#d9582a"/>
<path d="M766.5 31.8 L774.3 32.8 V34 L766.5 33.2 Z" fill="#ea7a4a" opacity="0.6"/>
<rect x="767.7" y="37.3" width="2.2" height="2.4" fill="#d6ead6"/><rect x="771" y="37.3" width="2.2" height="2.4" fill="#d6ead6"/>
<rect x="767.7" y="40.9" width="2.2" height="2.4" fill="#d6ead6"/><rect x="771" y="40.9" width="2.2" height="2.4" fill="#d6ead6"/>
<rect x="767.7" y="44.5" width="2.2" height="2.4" fill="#d6ead6"/><rect x="771" y="44.5" width="2.2" height="2.4" fill="#d6ead6"/>
<path d="M747.2 44.2 H754.2 V40.9 L763.8 47.4 L754.2 53.8 V50.7 H747.2 Z" fill="url(#hArrow)" stroke="#4f9020" stroke-width="0.8" stroke-linejoin="round"/>
<path d="M799 46 H804.5 L801.75 50 Z" fill="#4a70b4"/>
<!-- help -->
<circle cx="1522" cy="47.1" r="13.6" fill="#fff" stroke="#56608c" stroke-width="0.9"/>
<circle cx="1522" cy="47.1" r="11" fill="url(#hHelp)"/>
<path d="M1517.6 43.2 C1517.6 40.3 1519.6 38.8 1522.4 38.8 C1525.3 38.8 1527.2 40.5 1527.2 42.9 C1527.2 45 1526 45.8 1524.6 46.8 C1523.7 47.4 1523.6 48 1523.6 49.4 H1520.6 C1520.5 47.5 1520.8 46.3 1522.4 45.2 C1523.5 44.4 1524 44 1524 43 C1524 42 1523.4 41.5 1522.4 41.5 C1521.2 41.5 1520.6 42.2 1520.6 43.5 Z" fill="#fff"/>
<circle cx="1522.1" cy="52.6" r="1.9" fill="#fff"/>
<!-- factory -->
<path d="M269 101 V91.5 H274.5 L275 88 L278.5 91.5 L279 88 L282 91.5 V101 H279.5 V97 H277.8 V101 H273.5 V97 H271.8 V101 Z" fill="url(#hFact)"/>
<rect x="270.8" y="88.5" width="0.9" height="3" fill="#999"/>
<rect x="275.3" y="97" width="1.2" height="4" fill="#aaa"/>
</svg>

<svg class="a" style="left:0;top:0;z-index:6;pointer-events:none" width="1557" height="726" viewBox="0 0 1557 726">
<defs>
<linearGradient id="kFold" x1="0" y1="0" x2="0" y2="1"><stop offset="0" stop-color="#fde7b0"/><stop offset="1" stop-color="#e9a24a"/></linearGradient>
<linearGradient id="kFact" x1="0" y1="0" x2="1" y2="1"><stop offset="0" stop-color="#d2592a"/><stop offset="1" stop-color="#9a120c"/></linearGradient>
<linearGradient id="kArr" x1="0" y1="0" x2="0" y2="1"><stop offset="0" stop-color="#e4f2fc"/><stop offset="1" stop-color="#5e9ad8"/></linearGradient>
<linearGradient id="kChk" x1="0" y1="0" x2="1" y2="1"><stop offset="0" stop-color="#d8ee70"/><stop offset="1" stop-color="#8fbf3a"/></linearGradient>
<linearGradient id="kPlus" x1="0" y1="0" x2="0" y2="1"><stop offset="0" stop-color="#f8faff"/><stop offset="1" stop-color="#d6def0"/></linearGradient>
</defs>
<!-- left panel icons -->
<!-- folder -->
<path d="M14.5 176.5 V166.5 Q14.5 165.3 15.7 165.3 H20 L21.5 167 H26.5 Q27.5 167 27.5 168 V170 Z" fill="url(#kFold)" stroke="#b86e22" stroke-width="0.9"/>
<path d="M14.5 176.5 L17.3 170 H30 L27.3 176.5 Z" fill="url(#kFold)" stroke="#b86e22" stroke-width="0.9"/>
<path d="M22 165 Q25 160.8 28 163.5" stroke="#2a8a2a" stroke-width="1.3" fill="none"/>
<path d="M27 162 L29.5 165.5 L26 165.6 Z" fill="#2a8a2a"/>
<!-- factory -->
<path d="M14 203 V193 H20.5 V188.2 L24 192 V188.2 L29 193 V203 H26 V199 H24.5 V203 H18.5 V199 H17 V203 Z" fill="url(#kFact)"/>
<rect x="15.5" y="190" width="0.9" height="3" fill="#999"/>
<rect x="20.3" y="198" width="1.5" height="5" fill="#c7c7c7"/>
<rect x="15.3" y="196.5" width="1.6" height="2.2" fill="#e8eef0"/>
<rect x="26.3" y="196.5" width="1.6" height="2.2" fill="#e8eef0"/>
<!-- calculator -->
<rect x="14.5" y="214.5" width="14" height="14" rx="1" fill="#f4f6fb" stroke="#6a7db4" stroke-width="0.9"/>
<rect x="16.3" y="216.3" width="10.4" height="2.6" fill="#6aa8e8"/>
<rect x="16.5" y="220.8" width="2.3" height="2.2" fill="#7080b8"/><rect x="20.4" y="220.8" width="2.3" height="2.2" fill="#7080b8"/><rect x="24.3" y="220.8" width="2.3" height="2.2" fill="#e08a2a"/>
<rect x="16.5" y="224.6" width="2.3" height="2.2" fill="#7080b8"/><rect x="20.4" y="224.6" width="2.3" height="2.2" fill="#7080b8"/><rect x="24.3" y="224.6" width="2.3" height="2.2" fill="#7080b8"/>
<!-- table + sigma -->
<rect x="14.5" y="238.3" width="12.5" height="9" fill="#fff" stroke="#8ea4d0" stroke-width="0.8"/>
<rect x="14.5" y="238.3" width="12.5" height="2.6" fill="#7fb0e8"/>
<path d="M14.5 243.8 H27 M18.7 238.3 V247.3 M22.8 238.3 V247.3" stroke="#a8b8d8" stroke-width="0.6"/>
<rect x="20.5" y="243.3" width="8.2" height="8.2" fill="#fff" stroke="#5a6aa8" stroke-width="0.9"/>
<path d="M27 245 H22.5 L24.8 247.4 L22.5 249.8 H27" stroke="#b03010" stroke-width="1.2" fill="none"/>
<!-- link show -->
<rect x="17.5" y="263" width="9.5" height="6" rx="1.5" fill="#f0c880" stroke="#c89040" stroke-width="0.8"/>
<path d="M20.5 266 L19.3 267 L20.5 268 M23.8 266 L25 267 L23.8 268" stroke="#7a6040" stroke-width="0.6" fill="none"/>
<path d="M24.5 271.5 L27.3 267 L30 271.5 H28.2 V276 H26.4 V271.5 Z" fill="#e83a20"/>
<path d="M14 272.5 H23 M15.5 271 L14 272.5 L15.5 274 M14.5 277 H23 M21.5 275.5 L23 277 L21.5 278.5 M16 272.8 L21 276.8" stroke="#2a9aa0" stroke-width="1.1" fill="none"/>
<!-- expand arrow -->
<path d="M14.2 302 C14.5 297 18 293.8 23 293.8 V290.8 L29 295.8 L23 300.3 V297.3 C19 297.3 16.2 299 14.2 302 Z" fill="url(#kArr)" stroke="#5a88c8" stroke-width="0.8"/>
<!-- collapse arrow -->
<path d="M29.8 324.5 C29.5 320 26 317 21 317 V314.2 L15 318.8 L21 323.5 V320.5 C25 320.5 28 321.8 29.8 324.5 Z" fill="url(#kArr)" stroke="#5a88c8" stroke-width="0.8"/>

<!-- grid: plus box -->
<rect x="239.5" y="178.5" width="10" height="10" rx="1.8" fill="url(#kPlus)" stroke="#4c5a70" stroke-width="1"/>
<path d="M242 183.5 H247 M244.5 181 V186" stroke="#24344a" stroke-width="1.1"/>
<rect x="251" y="182" width="1" height="1" fill="#8aa8d8"/>
<!-- check marks -->
<path id="chk" d="M333.3 185.2 L335.3 183.6 L338 186.5 L344.8 178.2 L344.2 182.8 L338.2 189.6 Z" fill="url(#kChk)" stroke="#7aa030" stroke-width="0.6" stroke-linejoin="round"/>
<use href="#chk" x="-33" y="341"/>
<use href="#chk" x="-33" y="359"/>
<use href="#chk" x="-33" y="377"/>
<!-- sort arrow -->
<path d="M533.8 166.8 L538.4 161.9 L543 166.8 Z" fill="#93c0f8"/>
<!-- left collapse arrow -->
<path d="M207 418.2 V422.8 L203.9 420.5 Z" fill="#5b8ad0"/>
<!-- splitter triangle -->
<path d="M875.8 455.5 H881 L878.4 458.4 Z" fill="#4a80d0"/>

<!-- top navigator icons (gray) -->
<g fill="#8c8c8c">
<rect x="227" y="425.4" width="2.2" height="14"/>
<path d="M229.2 432.4 L237.7 425.4 V439.4 Z"/><path d="M237 432.4 L245.4 425.4 V439.4 Z"/>
<path d="M257 432.4 L266 425.4 V439.4 Z"/>
<path d="M319.6 425.4 L328.1 432.4 L319.6 439.4 Z"/>
<path d="M339.8 425.4 L348 432.4 L339.8 439.4 Z"/><path d="M347 425.4 L355.2 432.4 L347 439.4 Z"/>
<rect x="355.1" y="425.4" width="2.2" height="14"/>
</g>
<path d="M366.5 433.5 C367.5 428.5 371 426.3 375 426.3 C378 426.3 380.3 428 381.3 430 L383.9 428.2 V437.4 H375.4 L378.3 434.3 C377.6 432.3 376.5 431 374.6 431 C372.5 431 370.8 432.3 370 434.6 Z" fill="#1a3f8f"/>
<!-- top scroll arrows -->
<path d="M448.3 427.6 V437 L443 432.3 Z" fill="#4b5670"/>
<path d="M1525.5 427.5 V437.5 L1531 432.5 Z" fill="#4b5670"/>

<!-- lower navigator icons -->
<g fill="#8c8c8c">
<rect x="235.8" y="673.5" width="2.2" height="14"/>
<path d="M238 680.5 L246.4 673.5 V687.5 Z"/><path d="M246 680.5 L254.7 673.5 V687.5 Z"/>
<path d="M266.3 680.5 L274.7 673.5 V687.5 Z"/>
</g>
<g fill="#1a3f8f">
<path d="M328 673.5 L337 680.5 L328 687.5 Z"/>
<path d="M348.5 673.5 L356.5 680.5 L348.5 687.5 Z"/><path d="M356 673.5 L364.3 680.5 L356 687.5 Z"/>
<rect x="364.3" y="673.5" width="2.2" height="14"/>
</g>
<path d="M375.2 681.5 C376.2 676.5 379.7 674.3 383.7 674.3 C386.7 674.3 389 676 390 678 L392.9 676.2 V685.4 H384.1 L387 682.3 C386.3 680.3 385.2 679 383.3 679 C381.2 679 379.5 680.3 378.7 682.6 Z" fill="#1a3f8f"/>
<path d="M457.4 676 V685.6 L451.6 680.8 Z" fill="#8b9bc9"/>
<path d="M1514.5 676 V685.6 L1520 680.8 Z" fill="#8b9bc9"/>
<!-- lower grid indicator arrow -->
<path d="M237.5 520 L242 524 L237.5 528 Z" fill="#7fa8e0"/>
</svg>

</body></html>
